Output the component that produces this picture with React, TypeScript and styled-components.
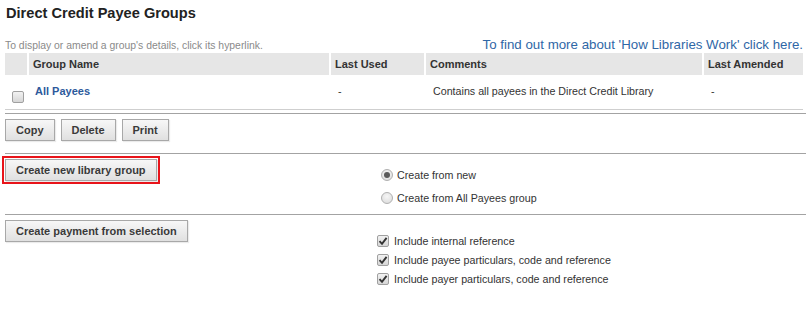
import React, { useState } from 'react';
import styled, { createGlobalStyle } from 'styled-components';

const GlobalStyle = createGlobalStyle`
  body {
    margin: 0;
    background: #fff;
    font-family: "Liberation Sans", Arial, sans-serif;
    color: #333;
  }
`;

const Page = styled.div`
  width: 809px;
  padding: 0 3px 0 5px;
  box-sizing: border-box;
`;

const Title = styled.h2`
  margin: 0;
  padding: 4px 0 0 1px;
  font-size: 14.6px;
  line-height: 18px;
  font-weight: bold;
  color: #222;
`;

const InfoBar = styled.div`
  display: flex;
  justify-content: space-between;
  align-items: flex-end;
  margin-top: 14px;
  padding-right: 3px;
`;

const Hint = styled.span`
  font-size: 10.4px;
  line-height: 14px;
  color: #8a8a8a;
`;

const HelpLink = styled.a`
  font-size: 13.3px;
  line-height: 17px;
  color: #2f67a6;
  text-decoration: none;
  cursor: pointer;
`;

const Table = styled.table`
  width: 798px;
  border-collapse: separate;
  border-spacing: 0;
  font-size: 10.7px;
  table-layout: fixed;
`;

const Th = styled.th<{ $w: number }>`
  width: ${(p) => p.$w}px;
  height: 22px;
  padding: 0 0 0 4px;
  background: #e6e6e6;
  border-left: 2px solid #fff;
  text-align: left;
  font-weight: bold;
  font-size: 11px;
  color: #333;
  box-sizing: border-box;
  &:first-child {
    border-left: none;
  }
`;

const Td = styled.td`
  height: 32px;
  padding: 0 0 2px 9px;
  border-bottom: 1px solid #cfcfcf;
  color: #333;
  vertical-align: middle;
`;

const CheckCell = styled.td`
  border-bottom: 1px solid #cfcfcf;
  padding: 12px 0 0 7px;
  vertical-align: middle;
`;

const GroupLink = styled.a`
  margin-left: -1px;
  color: #2d5a9c;
  font-weight: bold;
  font-size: 11px;
  text-decoration: none;
  cursor: pointer;
`;

const Section = styled.div<{ $split?: boolean }>`
  border-top: 1px solid #a3a3a3;
  padding: 5px 0 ${(p) => (p.$split ? 5 : 12)}px;
  display: ${(p) => (p.$split ? 'grid' : 'flex')};
  grid-template-columns: 366px 1fr;
  gap: 6px;
  align-items: start;
`;

const Divider = styled.div`
  height: 3px;
`;

const Button = styled.button<{ $highlighted?: boolean }>`
  height: 22px;
  padding: 0 10px;
  font-family: "Liberation Sans", Arial, sans-serif;
  font-size: 11px;
  font-weight: bold;
  color: #3a3a3a;
  background: linear-gradient(#f7f7f7, #e0e0e0);
  border: 1px solid #a8a8a8;
  border-radius: 0;
  box-shadow: 1px 1px 1px rgba(0, 0, 0, 0.08);
  cursor: pointer;
  outline: ${(p) => (p.$highlighted ? '2px solid #e8141a' : 'none')};
  outline-offset: 1px;
  justify-self: start;
`;

const OptionList = styled.div<{ $top: number; $row: number }>`
  display: flex;
  flex-direction: column;
  margin-top: ${(p) => p.$top}px;
  & > label {
    height: ${(p) => p.$row}px;
  }
`;

const Option = styled.label<{ $indent: number; $gap: number }>`
  display: flex;
  align-items: center;
  gap: ${(p) => p.$gap}px;
  padding-left: ${(p) => p.$indent}px;
  font-size: 10.7px;
  color: #333;
  cursor: pointer;
`;

const RadioDot = styled.span<{ $on: boolean }>`
  width: 12px;
  height: 12px;
  border-radius: 50%;
  border: 1px solid #b0b0b0;
  box-sizing: border-box;
  background: radial-gradient(circle at 50% 35%, #f6f6f6, #d9d9d9);
  display: flex;
  align-items: center;
  justify-content: center;
  &::after {
    content: '';
    width: 6px;
    height: 6px;
    border-radius: 50%;
    background: ${(p) => (p.$on ? '#5a5a5a' : 'transparent')};
  }
`;

const Box = styled.span`
  width: 12px;
  height: 12px;
  border: 1px solid #a0a0a0;
  border-radius: 2px;
  box-sizing: border-box;
  background: linear-gradient(#f2f2f2, #d6d6d6);
  display: inline-flex;
  align-items: center;
  justify-content: center;
  flex-shrink: 0;
`;

const Check = ({ on }: { on: boolean }) => (
  <Box>
    {on && (
      <svg width="10" height="10" viewBox="0 0 10 10">
        <path d="M1.5 5.2 L4 7.8 L8.6 1.8" fill="none" stroke="#333" strokeWidth="1.9" />
      </svg>
    )}
  </Box>
);

const columns = [
  { label: '', w: 22 },
  { label: 'Group Name', w: 302 },
  { label: 'Last Used', w: 95 },
  { label: 'Comments', w: 278 },
  { label: 'Last Amended', w: 101 },
];

const includes = [
  'Include internal reference',
  'Include payee particulars, code and reference',
  'Include payer particulars, code and reference',
];

export default function App() {
  const [source, setSource] = useState('new');

  return (
    <Page>
      <GlobalStyle />
      <Title>Direct Credit Payee Groups</Title>
      <InfoBar>
        <Hint>To display or amend a group's details, click its hyperlink.</Hint>
        <HelpLink>To find out more about 'How Libraries Work' click here.</HelpLink>
      </InfoBar>
      <Table>
        <thead>
          <tr>
            {columns.map((c) => (
              <Th key={c.label} $w={c.w}>
                {c.label}
              </Th>
            ))}
          </tr>
        </thead>
        <tbody>
          <tr>
            <CheckCell>
              <Check on={false} />
            </CheckCell>
            <Td>
              <GroupLink>All Payees</GroupLink>
            </Td>
            <Td>-</Td>
            <Td>Contains all payees in the Direct Credit Library</Td>
            <Td>-</Td>
          </tr>
        </tbody>
      </Table>
      <Divider />
      <Section>
        <Button>Copy</Button>
        <Button>Delete</Button>
        <Button>Print</Button>
      </Section>
      <Section $split>
        <Button $highlighted>Create new library group</Button>
        <OptionList $top={4} $row={23}>
          <Option $indent={4} $gap={4} onClick={() => setSource('new')}>
            <RadioDot $on={source === 'new'} />
            Create from new
          </Option>
          <Option $indent={4} $gap={4} onClick={() => setSource('all')}>
            <RadioDot $on={source === 'all'} />
            Create from All Payees group
          </Option>
        </OptionList>
      </Section>
      <Section $split>
        <Button>Create payment from selection</Button>
        <OptionList $top={12} $row={18.7}>
          {includes.map((t) => (
            <Option key={t} $indent={0} $gap={5}>
              <Check on />
              {t}
            </Option>
          ))}
        </OptionList>
      </Section>
    </Page>
  );
}
